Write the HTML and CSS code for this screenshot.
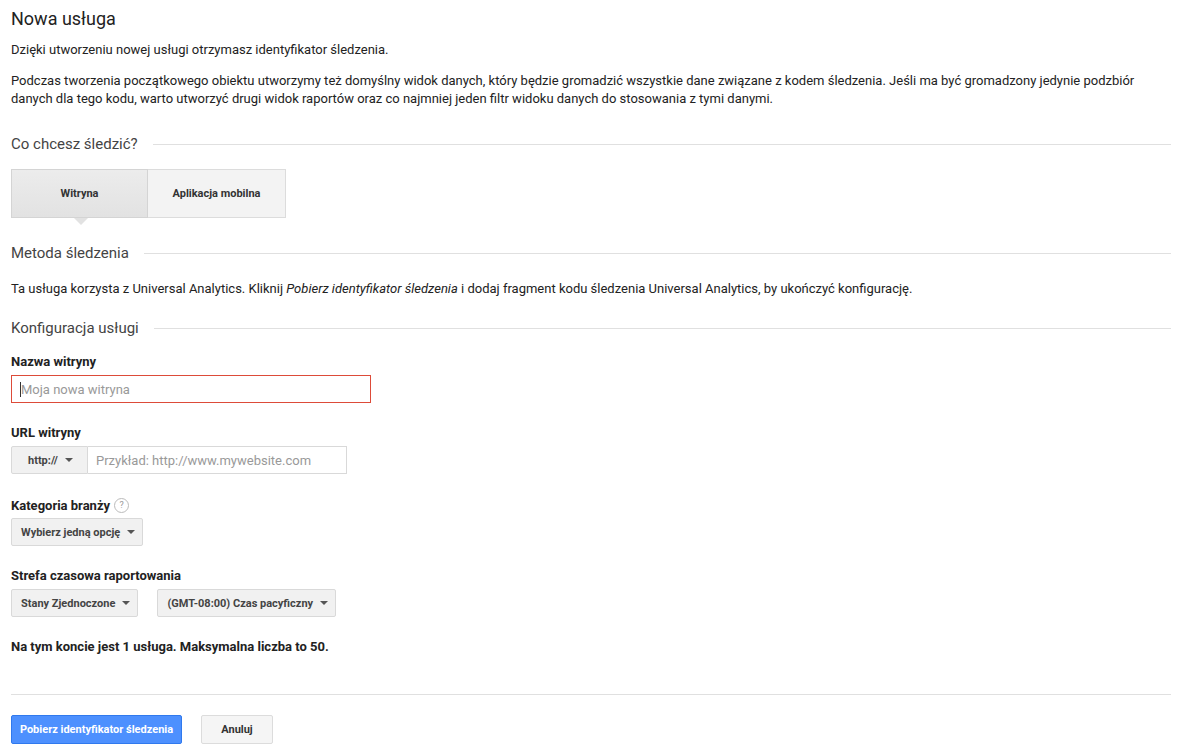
FILE: index.html
```html
<!DOCTYPE html>
<html lang="pl">
<head>
	<meta charset="UTF-8">
	<title>Nowa usługa</title>
	<link rel="stylesheet" href="styles.css">
</head>
<body>
	<div class="page">
		<h1 class="title">Nowa usługa</h1>
		<p class="intro">Dzięki utworzeniu nowej usługi otrzymasz identyfikator śledzenia.</p>
		<p class="desc">Podczas tworzenia początkowego obiektu utworzymy też domyślny widok danych, który będzie gromadzić wszystkie dane związane z kodem śledzenia. Jeśli ma być gromadzony jedynie podzbiór danych dla tego kodu, warto utworzyć drugi widok raportów oraz co najmniej jeden filtr widoku danych do stosowania z tymi danymi.</p>

		<div class="section">
			<span class="sectionTitle">Co chcesz śledzić?</span>
			<span class="sectionLine"></span>
		</div>
		<div class="tabs">
			<button class="tab active">Witryna</button>
			<button class="tab">Aplikacja mobilna</button>
		</div>

		<div class="section sectionMethod">
			<span class="sectionTitle">Metoda śledzenia</span>
			<span class="sectionLine"></span>
		</div>
		<p class="method">Ta usługa korzysta z Universal Analytics. Kliknij <em>Pobierz identyfikator śledzenia</em> i dodaj fragment kodu śledzenia Universal Analytics, by ukończyć konfigurację.</p>

		<div class="section sectionConfig">
			<span class="sectionTitle">Konfiguracja usługi</span>
			<span class="sectionLine"></span>
		</div>

		<div class="field">
			<label class="label">Nazwa witryny</label>
			<div class="textInput error"><span class="caret"></span><span class="placeholder">Moja nowa witryna</span></div>
		</div>

		<div class="field">
			<label class="label">URL witryny</label>
			<div class="urlRow">
				<button class="select selectProto">http:// <span class="arrow"></span></button>
				<div class="textInput urlInput"><span class="placeholder">Przykład: http://www.mywebsite.com</span></div>
			</div>
		</div>

		<div class="field fieldCategory">
			<label class="label">Kategoria branży <span class="help">?</span></label>
			<button class="select">Wybierz jedną opcję <span class="arrow"></span></button>
		</div>

		<div class="field">
			<label class="label">Strefa czasowa raportowania</label>
			<div class="tzRow">
				<button class="select selectCountry">Stany Zjednoczone <span class="arrow"></span></button>
				<button class="select">(GMT-08:00) Czas pacyficzny <span class="arrow"></span></button>
			</div>
		</div>

		<p class="quota">Na tym koncie jest 1 usługa. Maksymalna liczba to 50.</p>

		<div class="footer">
			<button class="btn btnPrimary">Pobierz identyfikator śledzenia</button>
			<button class="btn btnCancel">Anuluj</button>
		</div>
	</div>
</body>
</html>
```

FILE: styles.css
```css
html,body,p,h1{margin:0;padding:0;}
body{
	background-color: #fff;
	font-family: Roboto, "Liberation Sans", Arial, sans-serif;
	color: #222;
	font-size: 13px;
}
.page{
	padding: 0 26px 0 11px;
}
.title{
	font-size: 18px;
	font-weight: 400;
	color: #222;
	line-height: 24px;
	padding-top: 7px;
}
.intro{
	margin-top: 10px;
	line-height: 18px;
}
.desc{
	margin-top: 13px;
	line-height: 18px;
}
.section{
	display: flex;
	align-items: center;
	margin-top: 25px;
	height: 22px;
}
.sectionTitle{
	font-size: 15px;
	color: #444;
	padding-right: 15px;
	white-space: nowrap;
}
.sectionLine{
	flex: 1;
	border-top: 1px solid #e0e0e0;
}
.tabs{
	display: flex;
	margin-top: 14px;
}
.tab{
	position: relative;
	width: 138px;
	height: 49px;
	border: 1px solid #dcdcdc;
	background-color: #f3f3f3;
	font-family: Roboto, "Liberation Sans", Arial, sans-serif;
	font-size: 11px;
	font-weight: 700;
	color: #333;
	padding: 0;
}
.tab + .tab{
	border-left: 0;
}
.tab.active{
	width: 137px;
	background: linear-gradient(#ececec, #e2e2e2);
	border-color: #d4d4d4;
}
.tab.active:after{
	content: "";
	position: absolute;
	left: 62px;
	bottom: -8px;
	border-left: 7px solid transparent;
	border-right: 7px solid transparent;
	border-top: 7px solid #e2e2e2;
}
.sectionMethod{
	margin-top: 24px;
}
.method{
	margin-top: 16px;
	line-height: 18px;
}
.sectionConfig{
	margin-top: 19px;
}
.field{
	margin-top: 12px;
}
.field + .field{
	margin-top: 19px;
}
.field + .fieldCategory{
	margin-top: 21px;
}
.fieldCategory .label{
	margin-bottom: 3px;
}
.label{
	display: flex;
	align-items: center;
	font-weight: 700;
	font-size: 13px;
	color: #222;
	height: 20px;
	margin-bottom: 4px;
}
.help{
	display: inline-flex;
	align-items: center;
	justify-content: center;
	width: 13px;
	height: 13px;
	border: 1px solid #bbb;
	border-radius: 50%;
	font-size: 9px;
	font-weight: 400;
	color: #999;
	margin-left: 4px;
}
.textInput{
	display: flex;
	align-items: center;
	box-sizing: border-box;
	width: 360px;
	height: 28px;
	border: 1px solid #d9d9d9;
	padding-left: 8px;
	font-size: 13px;
}
.textInput.error{
	border-color: #dd4b39;
}
.caret{
	width: 1px;
	height: 15px;
	background-color: #333;
}
.placeholder{
	color: #999;
}
.urlRow,.tzRow{
	display: flex;
}
.tzRow{
	gap: 19px;
}
.urlInput{
	width: 259px;
	border-left: 0;
	padding-left: 8px;
}
.select{
	display: inline-flex;
	align-items: center;
	box-sizing: border-box;
	height: 28px;
	padding: 0 7px 0 9px;
	border: 1px solid #d9d9d9;
	border-radius: 2px;
	background-color: #f1f1f1;
	font-family: Roboto, "Liberation Sans", Arial, sans-serif;
	font-size: 11px;
	font-weight: 700;
	color: #444;
	white-space: nowrap;
}
.selectProto{
	width: 77px;
	padding-left: 16px;
	border-radius: 2px 0 0 2px;
}
.arrow{
	display: inline-block;
	margin-left: 7px;
	border-left: 4px solid transparent;
	border-right: 4px solid transparent;
	border-top: 4px solid #555;
}
.quota{
	margin-top: 21px;
	font-weight: 700;
	color: #222;
	line-height: 18px;
}
.footer{
	margin-top: 38px;
	border-top: 1px solid #e0e0e0;
	padding-top: 20px;
	display: flex;
	gap: 19px;
}
.btn{
	height: 29px;
	box-sizing: border-box;
	border-radius: 2px;
	font-family: Roboto, "Liberation Sans", Arial, sans-serif;
	font-size: 11px;
	font-weight: 700;
	padding: 0;
	white-space: nowrap;
}
.btnPrimary{
	width: 171px;
	background-color: #4d90fe;
	border: 1px solid #3079ed;
	color: #fff;
}
.btnCancel{
	width: 72px;
	background-color: #f5f5f5;
	border: 1px solid #dcdcdc;
	color: #333;
}
```
